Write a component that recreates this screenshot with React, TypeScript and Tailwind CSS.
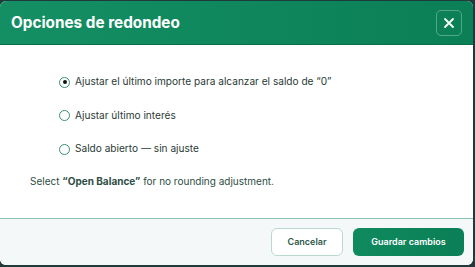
import React, { useState } from "react";

const options = [
  "Ajustar el último importe para alcanzar el saldo de “0”",
  "Ajustar último interés",
  "Saldo abierto — sin ajuste",
];

export default function App() {
  const [sel, setSel] = useState(0);
  return (
    <div className="w-[475px] h-[267px] bg-[#1e3a3a] pt-[1px] overflow-hidden" style={{ fontFamily: "Inter, 'Noto Sans', sans-serif" }}>
      <div className="w-[473px] h-[264px] bg-white rounded-md overflow-hidden flex flex-col">
        <div className="h-[44px] shrink-0 bg-gradient-to-r from-[#148f63] to-[#0b7f56] flex items-center justify-between pl-[11px] pr-[11px] border-b border-[#0a6e4a]">
          <h1 className="text-white font-bold text-[15.3px] leading-none">Opciones de redondeo</h1>
          <button className="w-[26px] h-[26px] rounded-[5px] border border-white/30 flex items-center justify-center text-white">
            <svg width="12" height="12" viewBox="0 0 12 12" fill="none" stroke="currentColor" strokeWidth="1.8" strokeLinecap="round">
              <path d="M2 2L10 10M10 2L2 10" />
            </svg>
          </button>
        </div>
        <div className="flex-1 flex flex-col pl-[30px] pt-[30px]">
          <div className="flex flex-col gap-[19.5px] pl-[29px]">
            {options.map((o, i) => (
              <label key={i} className="flex items-center gap-[5px] h-[14px] cursor-pointer" onClick={() => setSel(i)}>
                <span className="w-[11px] h-[11px] rounded-full border border-[#3a8f72] flex items-center justify-center bg-white">
                  {sel === i && <span className="w-[4px] h-[4px] rounded-full bg-[#111]" />}
                </span>
                <span className="text-[10.1px] text-[#2a3a35]">{o}</span>
              </label>
            ))}
          </div>
          <p className="mt-[18px] text-[10px] leading-[15px] text-[#2e4d43]">
            Select <span className="font-bold">“Open Balance”</span> for no rounding adjustment.
          </p>
        </div>
        <div className="h-[47px] shrink-0 border-t border-[#8fbfae] bg-[#f5f8f9] flex items-center justify-end gap-[10px] pr-[9px]">
          <button className="w-[72px] h-[28px] rounded-[6px] border border-[#b9d9ce] bg-white text-[#2e5a4c] text-[9px] font-semibold">Cancelar</button>
          <button className="w-[111px] h-[28px] rounded-[6px] bg-gradient-to-r from-[#108a5f] to-[#0b7f57] text-white text-[9px] font-semibold">Guardar cambios</button>
        </div>
      </div>
    </div>
  );
}
